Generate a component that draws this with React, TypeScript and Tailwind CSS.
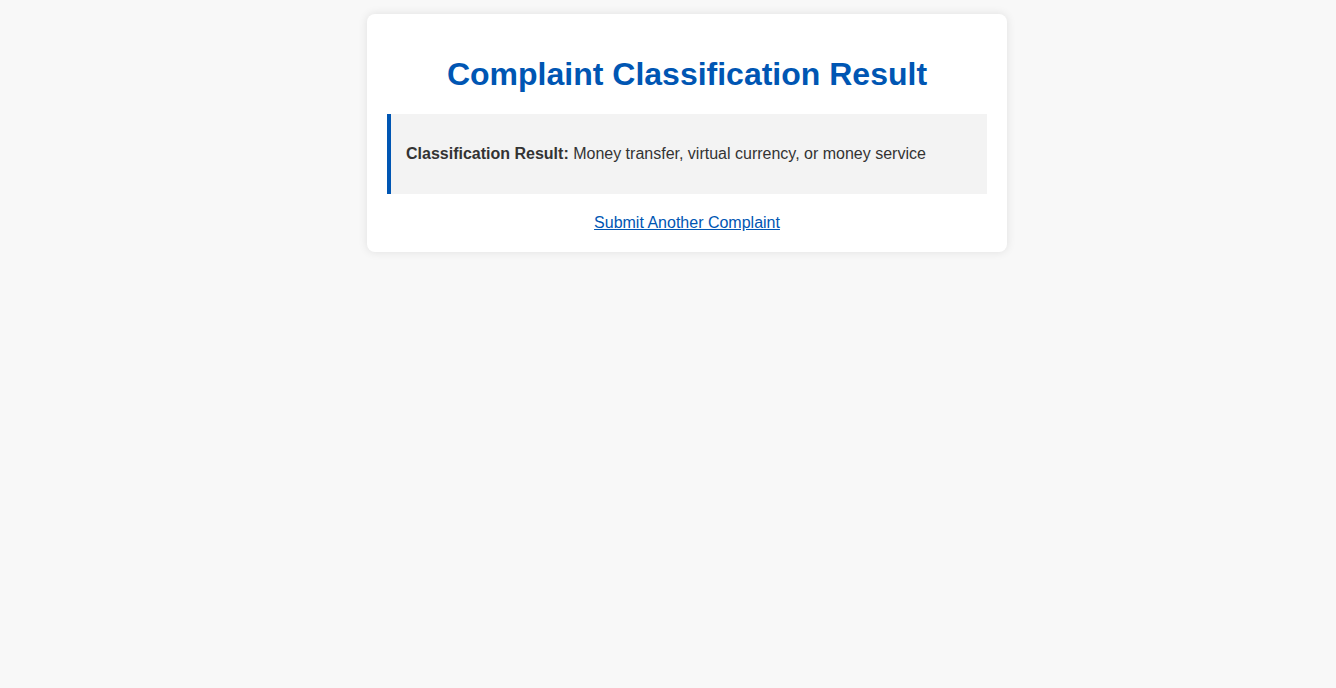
export default function App() {
  return (
    <div className="min-h-screen bg-[#f8f8f8] pl-[38px] pt-[14px]" style={{ fontFamily: '"Liberation Sans", Arial, sans-serif' }}>
      <div className="mx-auto w-[640px] rounded-lg bg-white p-5 shadow-[0_0_10px_rgba(0,0,0,0.1)]">
        <h1 className="mb-[21px] mt-[22px] text-center text-[32px] font-bold leading-[37px] text-[#0056b3]">
          Complaint Classification Result
        </h1>
        <div className="border-l-4 border-[#0056b3] bg-[#f3f3f3] px-[15px] py-[15px]">
          <p className="my-4 text-base leading-[18px] text-[#333]">
            <strong>Classification Result:</strong> Money transfer, virtual currency, or money service
          </p>
        </div>
        <div className="mt-5 text-center text-base leading-[18px]">
          <a href="#" className="text-[#0056b3] underline">Submit Another Complaint</a>
        </div>
      </div>
    </div>
  );
}
